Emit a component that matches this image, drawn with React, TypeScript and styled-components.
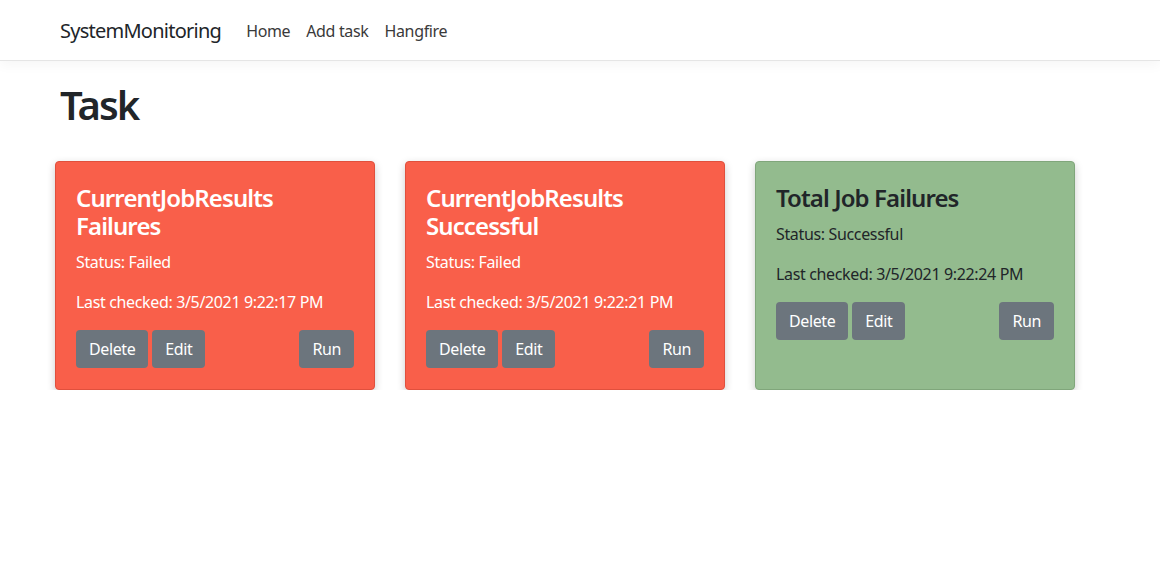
import React from "react";
import styled, { createGlobalStyle } from "styled-components";

const Global = createGlobalStyle`
  html, body { margin: 0; padding: 0; background: #fff; }
  body {
    font-family: "Noto Sans", "Open Sans", sans-serif;
    font-size: 16px;
    line-height: 1.5;
    color: #212529;
  }
  * { box-sizing: border-box; }
`;

const NavBar = styled.nav`
  height: 61px;
  border-bottom: 1px solid #e5e5e5;
  box-shadow: 0 4px 12px rgba(0, 0, 0, 0.04);
  display: flex;
  align-items: center;
  padding: 2px 60px 0;
`;

const Brand = styled.a`
  font-size: 20px;
  color: #212529;
  margin-right: 17px;
  text-decoration: none;
  letter-spacing: -0.75px;
`;

const NavLink = styled.a`
  font-size: 16px;
  color: #3a3a3a;
  padding: 0 8px;
  text-decoration: none;
  letter-spacing: -0.35px;
`;

const Main = styled.main`
  padding: 0 55px;
`;

const Heading = styled.h1`
  font-size: 40px;
  font-weight: 600;
  margin: 20px 0 32px 5px;
  line-height: 1.2;
  letter-spacing: -2px;
`;

const Grid = styled.div`
  display: grid;
  grid-template-columns: repeat(3, 320px);
  gap: 30px;
`;

const Card = styled.div<{ $ok: boolean }>`
  background: ${(p) => (p.$ok ? "#93bb8e" : "#f95f4a")};
  border: 1px solid ${(p) => (p.$ok ? "#80a67b" : "#e0503d")};
  border-radius: 4px;
  box-shadow: 0 3px 8px rgba(0, 0, 0, 0.2);
  padding: 22px 20px 21px;
  color: ${(p) => (p.$ok ? "#212529" : "#fff")};
`;

const Title = styled.h4`
  font-size: 24px;
  font-weight: 600;
  line-height: 28px;
  margin: 0 0 10px;
  letter-spacing: -0.9px;
`;

const Text = styled.p`
  margin: 0 0 16px;
  font-size: 16px;
  line-height: 24px;
  letter-spacing: -0.35px;
`;

const Actions = styled.div`
  display: flex;
  gap: 4px;
  margin-top: 0;
`;

const Button = styled.button<{ $push?: boolean }>`
  background: #6c757d;
  color: #fff;
  border: none;
  border-radius: 4px;
  height: 38px;
  padding: 0 13px;
  font-family: inherit;
  font-size: 16px;
  letter-spacing: -0.4px;
  margin-left: ${(p) => (p.$push ? "auto" : "0")};
`;

const tasks = [
  { name: "CurrentJobResults Failures", ok: false, status: "Failed", time: "3/5/2021 9:22:17 PM" },
  { name: "CurrentJobResults Successful", ok: false, status: "Failed", time: "3/5/2021 9:22:21 PM" },
  { name: "Total Job Failures", ok: true, status: "Successful", time: "3/5/2021 9:22:24 PM" },
];

export default function App() {
  return (
    <>
      <Global />
      <NavBar>
        <Brand>SystemMonitoring</Brand>
        <NavLink>Home</NavLink>
        <NavLink>Add task</NavLink>
        <NavLink>Hangfire</NavLink>
      </NavBar>
      <Main>
        <Heading>Task</Heading>
        <Grid>
          {tasks.map((t) => (
            <Card key={t.name} $ok={t.ok}>
              <Title>{t.name}</Title>
              <Text>Status: {t.status}</Text>
              <Text>Last checked: {t.time}</Text>
              <Actions>
                <Button>Delete</Button>
                <Button>Edit</Button>
                <Button $push>Run</Button>
              </Actions>
            </Card>
          ))}
        </Grid>
      </Main>
    </>
  );
}
